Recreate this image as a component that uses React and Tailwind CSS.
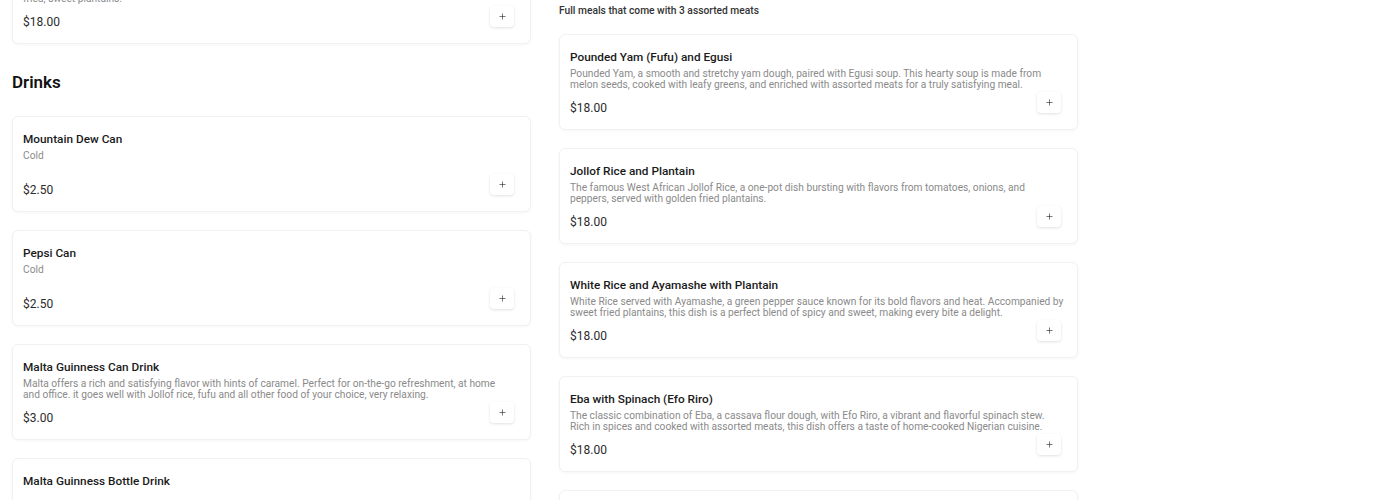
import { Plus } from "lucide-react";

const drinks = [
  { name: "Mountain Dew Can", desc: "Cold", price: "$2.50" },
  { name: "Pepsi Can", desc: "Cold", price: "$2.50" },
  {
    name: "Malta Guinness Can Drink",
    desc: "Malta offers a rich and satisfying flavor with hints of caramel. Perfect for on-the-go refreshment, at home and\u00a0office. it goes well with Jollof rice, fufu and all other food of your choice, very relaxing.",
    price: "$3.00",
  },
  { name: "Malta Guinness Bottle Drink", desc: "", price: "$3.00" },
];

const meals = [
  {
    name: "Pounded Yam (Fufu) and Egusi",
    desc: "Pounded Yam, a smooth and stretchy yam dough, paired with Egusi soup. This hearty soup is made from melon seeds, cooked with leafy greens, and enriched with assorted meats for a truly satisfying meal.",
    price: "$18.00",
  },
  {
    name: "Jollof Rice and Plantain",
    desc: "The famous West African Jollof Rice, a one-pot dish bursting with flavors from tomatoes, onions, and peppers, served with golden fried plantains.",
    price: "$18.00",
  },
  {
    name: "White Rice and Ayamashe with Plantain",
    desc: "White Rice served with Ayamashe, a green pepper sauce known for its bold flavors and heat. Accompanied by sweet fried plantains, this dish is a perfect blend of spicy and sweet, making every bite a delight.",
    price: "$18.00",
  },
  {
    name: "Eba with Spinach (Efo Riro)",
    desc: "The classic combination of Eba, a cassava flour dough, with Efo Riro, a vibrant and flavorful spinach stew. Rich in spices and cooked with assorted meats, this dish offers a taste of home-cooked Nigerian cuisine.",
    price: "$18.00",
  },
  { name: "Amala and Ewedu", desc: "", price: "$18.00" },
];

function ItemCard({ item }) {
  return (
    <div className="flex h-[96px] flex-col rounded-md border border-[#f1f1f1] bg-white pl-[10px] pr-[11px] pt-[14px] pb-[13px] shadow-[0_1px_3px_rgba(0,0,0,0.04)]">
      <h3 className="text-[11.8px] leading-4 font-medium text-[#1a1a1a]">{item.name}</h3>
      <p className="mt-[3px] text-[10.2px] leading-[11px] text-[#8a8a8a]">{item.desc}</p>
      <div className="mt-auto flex items-end justify-between">
        <span className="text-[12px] leading-4 text-[#2b2b2b]">{item.price}</span>
        <button className="mr-[5px] mb-[3px] flex h-[21px] w-[24px] items-center justify-center rounded-[4px] bg-white text-[#222] shadow-[0_1px_3px_rgba(0,0,0,0.12)]">
          <Plus size={9} strokeWidth={1.6} />
        </button>
      </div>
    </div>
  );
}

export default function App() {
  return (
    <div
      className="h-[500px] overflow-hidden bg-white"
      style={{ fontFamily: "Roboto, 'Liberation Sans', sans-serif" }}
    >
      <div className="flex gap-[28px] px-[12px]">
        <div className="-mt-[52px] flex w-[519px] flex-col">
          <ItemCard
            item={{
              name: "Fried Rice and Plantain",
              desc: (
                <>
                  Fried Rice, a flavorful blend of rice stir-fried with mixed vegetables and seasonings, served with golden
                  <br />
                  fried, sweet plantains.
                </>
              ),
              price: "$18.00",
            }}
          />
          <h2 className="mt-[26px] text-[17px] leading-6 font-semibold text-[#111]">Drinks</h2>
          <div className="mt-[22px] flex flex-col gap-[18px]">
            {drinks.map((item, index) => (
              <ItemCard item={item} key={index} />
            ))}
          </div>
        </div>
        <div className="mt-[4px] flex w-[519px] flex-col">
          <p className="text-[10.25px] leading-[14px] font-medium text-[#333]">
            Full meals that come with 3 assorted meats
          </p>
          <div className="mt-[16px] flex flex-col gap-[18px]">
            {meals.map((item, index) => (
              <ItemCard item={item} key={index} />
            ))}
          </div>
        </div>
      </div>
    </div>
  );
}
